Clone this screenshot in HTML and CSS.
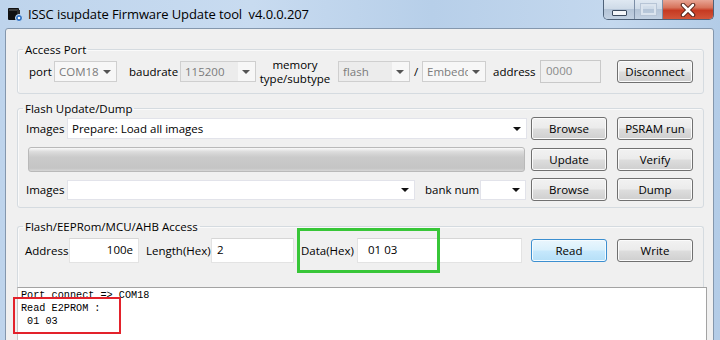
FILE: index.html
```html
<!DOCTYPE html>
<html lang="en">
<head>
    <meta charset="UTF-8">
    <title>ISSC isupdate Firmware Update tool</title>
    <link rel="stylesheet" href="styles.css">
</head>
<body>
    <div class="window">
        <!-- Title Bar -->
        <div class="titlebar">
            <svg class="app-icon" width="16" height="16" viewBox="0 0 16 16">
                <rect x="1" y="2" width="11" height="12" rx="1" fill="#111"/>
                <rect x="2" y="3" width="9" height="2" fill="#3a3a3a"/>
                <rect x="10" y="4" width="3" height="9" fill="#2b2b2b"/>
                <circle cx="12" cy="12" r="3.5" fill="#2d6fc0" stroke="#cfe2f6" stroke-width="1"/>
                <circle cx="12" cy="12" r="1.3" fill="#fff"/>
            </svg>
            <div class="title-text">ISSC isupdate Firmware Update tool&nbsp; v4.0.0.207</div>
            <div class="caption-buttons">
                <div class="cap-btn cap-min"><span class="min-glyph"></span></div>
                <div class="cap-btn cap-max"><span class="max-glyph"></span></div>
                <div class="cap-btn cap-close">
                    <svg width="20" height="14" viewBox="0 0 20 14">
                        <path d="M5 2 L15 12 M15 2 L5 12" stroke="#4a1a12" stroke-width="4.5" stroke-linecap="round"/>
                        <path d="M5 2 L15 12 M15 2 L5 12" stroke="#fff" stroke-width="2.6" stroke-linecap="round"/>
                    </svg>
                </div>
            </div>
        </div>

        <!-- Client Area -->
        <div class="client">
            <fieldset class="group group-port">
                <legend>Access Port</legend>
                <div class="row">
                    <span class="lbl lbl-port">port</span>
                    <div class="combo disabled w-com"><span class="val">COM18</span><span class="arrow"></span></div>
                    <span class="lbl lbl-baud">baudrate</span>
                    <div class="combo disabled shaded w-baud"><span class="val">115200</span><span class="arrow"></span></div>
                    <span class="lbl lbl-mem">memory<br>type/subtype</span>
                    <div class="combo disabled shaded w-flash"><span class="val">flash</span><span class="arrow"></span></div>
                    <span class="lbl lbl-slash">/</span>
                    <div class="combo disabled w-emb"><span class="val">Embedded</span><span class="arrow"></span></div>
                    <span class="lbl lbl-addr">address</span>
                    <div class="textbox disabled w-addr">0000</div>
                    <button class="btn btn-right">Disconnect</button>
                </div>
            </fieldset>

            <fieldset class="group group-flash">
                <legend>Flash Update/Dump</legend>
                <div class="row row-img">
                    <span class="lbl lbl-images">Images</span>
                    <div class="combo w-images"><span class="val">Prepare: Load all images</span><span class="arrow"></span></div>
                    <button class="btn btn-mid">Browse</button>
                    <button class="btn btn-right">PSRAM run</button>
                </div>
                <div class="row row-progress">
                    <div class="progress"></div>
                    <button class="btn btn-mid">Update</button>
                    <button class="btn btn-right">Verify</button>
                </div>
                <div class="row row-dump">
                    <span class="lbl lbl-images">Images</span>
                    <div class="combo w-images2"><span class="val"></span><span class="arrow"></span></div>
                    <span class="lbl lbl-bank">bank num</span>
                    <div class="combo w-bank"><span class="val"></span><span class="arrow"></span></div>
                    <button class="btn btn-mid">Browse</button>
                    <button class="btn btn-right">Dump</button>
                </div>
            </fieldset>

            <fieldset class="group group-access">
                <legend>Flash/EEPRom/MCU/AHB Access</legend>
                <div class="row row-access">
                    <span class="lbl lbl-address">Address</span>
                    <div class="textbox w-address right">100e</div>
                    <span class="lbl lbl-length">Length(Hex)</span>
                    <div class="textbox w-length">2</div>
                    <span class="lbl lbl-data">Data(Hex)</span>
                    <div class="textbox w-data">01 03</div>
                    <button class="btn btn-default">Read</button>
                    <button class="btn btn-right">Write</button>
                </div>
            </fieldset>

            <div class="log">
                <div class="log-line">Port connect =&gt; COM18</div>
                <div class="log-line">Read E2PROM :</div>
                <div class="log-line">&nbsp;01 03</div>
            </div>
        </div>

        <!-- Annotation marks -->
        <div class="mark mark-green"></div>
        <div class="mark mark-red"></div>
    </div>
</body>
</html>
```

FILE: styles.css
```css
/* General Styles */
body {
    margin: 0;
    font-family: 'Open Sans', 'Noto Sans', sans-serif;
    font-size: 11.5px;
    color: #000;
    background: #c2d7ee;
}

.window {
    position: relative;
    width: 720px;
    height: 340px;
    overflow: hidden;
    background: linear-gradient(to right, #bed4ec 0%, #c8dbf0 35%, #b7cfe9 60%, #c4d8ee 85%, #b3cce7 100%);
}

/* Title Bar */
.titlebar {
    height: 28px;
    display: flex;
    align-items: flex-start;
}

.app-icon {
    margin: 6px 0 0 7px;
}

.title-text {
    margin: 5px 0 0 5px;
    font-family: 'Open Sans', sans-serif;
    font-size: 13px;
    color: #000;
    letter-spacing: -0.1px;
}

.caption-buttons {
    margin-left: auto;
    margin-right: 6px;
    display: flex;
    height: 19px;
    border: 1px solid #4f6279;
    border-top: none;
    border-radius: 0 0 5px 5px;
    overflow: hidden;
}

.cap-btn {
    display: flex;
    justify-content: center;
    align-items: center;
}

.cap-min,
.cap-max {
    width: 30px;
    background: linear-gradient(#dfe8f2 0%, #cfdbe8 45%, #b4c4d7 50%, #c2d1e2 100%);
    border-right: 1px solid #7c8ea6;
}

.cap-max {
    width: 27px;
}

.min-glyph {
    width: 13px;
    height: 4px;
    margin-top: 6px;
    background: #f4f6f9;
    border: 1px solid #3b4a5e;
    border-radius: 1px;
}

.max-glyph {
    width: 11px;
    height: 7px;
    border: 2px solid #dbe4ee;
    outline: 1px solid #b7c5d6;
}

.cap-close {
    width: 50px;
    background: linear-gradient(#e8a594 0%, #d7735b 40%, #c63a22 55%, #d2553a 100%);
}

/* Client Area */
.client {
    margin-left: 5px;
    width: 696px;
    height: 320px;
    padding: 13px 0 0 11px;
    background: #f0f0f0;
    border: 1px solid #8497ad;
    border-radius: 3px 3px 0 0;
}

.group {
    margin: 0;
    width: 685px;
    padding: 0;
    border: 1px solid #d5dbe0;
    border-radius: 3px;
    box-shadow: inset 1px 1px 0 #fafafa;
}

.group legend {
    margin-left: 5px;
    padding: 0 2px;
    line-height: 15px;
}

.group-port {
    padding: 3px 0 10px;
}

.group-flash {
    margin-top: 7px;
    padding: 1px 0 6px;
}

.group-access {
    margin-top: 11px;
    padding: 4px 0 24px;
    border-bottom: none;
    border-radius: 3px 3px 0 0;
}

.row {
    display: flex;
    align-items: center;
    height: 23px;
}

.row-img {
    height: 22px;
}

.row-progress {
    height: 25px;
    margin-top: 8px;
}

.row-dump {
    margin-top: 6px;
}

.row-access {
    height: 25px;
}

/* Labels */
.lbl {
    flex: none;
    white-space: nowrap;
    line-height: 15px;
}

.lbl-port { margin-left: 11px; width: 25px; }
.lbl-baud { margin-left: 12px; width: 51px; }
.lbl-mem { width: 78px; padding-right: 4px; text-align: center; line-height: 14px; }
.lbl-slash { width: 12px; text-align: center; }
.lbl-addr { width: 47px; padding-left: 7px; }
.lbl-images { width: 41px; padding-left: 8px; }
.lbl-bank { width: 55px; padding-left: 10px; }
.lbl-address { width: 44px; padding-left: 7px; }
.lbl-length { width: 65px; padding-left: 7px; }
.lbl-data { width: 56px; padding-left: 7px; }

/* Combo boxes */
.combo {
    flex: none;
    box-sizing: border-box;
    height: 21px;
    display: flex;
    align-items: center;
    background: #fff;
    border: 1px solid #e2e3ea;
}

.combo .val {
    flex: 1;
    height: 100%;
    padding-left: 4px;
    line-height: 19px;
    overflow: hidden;
    white-space: nowrap;
}

.combo .arrow {
    flex: none;
    width: 0;
    height: 0;
    margin: 1px 5px 0 4px;
    border-left: 4px solid transparent;
    border-right: 4px solid transparent;
    border-top: 4px solid #111;
}

.combo.disabled {
    background: #f7f7f7;
    border-color: #cfcfcf;
    color: #7b7b7b;
}

.combo.disabled .arrow {
    border-top-color: #555;
}

.combo.shaded .val {
    background: #ececec;
}

.w-com { width: 63px; }
.w-baud { width: 76px; }
.w-flash { width: 72px; }
.w-emb { width: 64px; }
.w-images { width: 460px; }
.w-images2 { width: 348px; height: 20px; }
.w-bank { width: 46px; height: 20px; }

/* Text boxes */
.textbox {
    flex: none;
    box-sizing: border-box;
    height: 25px;
    padding: 0 5px;
    line-height: 22px;
    background: #fff;
    border: 1px solid #e3e3e3;
    border-top-color: #d6d6d6;
    white-space: nowrap;
}

.textbox.disabled {
    height: 23px;
    line-height: 19px;
    background: #f0f0f0;
    border-color: #c9c9c9;
    color: #8a8a8a;
}

.textbox.right {
    text-align: right;
}

.w-addr { width: 61px; }
.w-address { width: 70px; }
.w-length { width: 83px; }
.w-data { width: 165px; padding-left: 10px; }

/* Buttons */
.btn {
    flex: none;
    box-sizing: border-box;
    width: 76px;
    height: 23px;
    padding: 0;
    font-family: inherit;
    font-size: inherit;
    color: #000;
    border: 1px solid #707070;
    border-radius: 3px;
    background: linear-gradient(#f2f2f2 0%, #ebebeb 48%, #dddddd 52%, #cfcfcf 100%);
    box-shadow: inset 0 0 0 1px #fbfbfb;
}

.btn-mid {
    margin-left: 4px;
}

.row-progress .btn-mid { margin-left: 6px; }
.row-dump .btn-mid { margin-left: 5px; }

.btn-right {
    margin-left: 10px;
}

.btn-default {
    margin-left: 9px;
    border-color: #3c8fd0;
    background: linear-gradient(#eaf6fd 0%, #d9f0fc 48%, #c6e8fc 52%, #b5dff7 100%);
    box-shadow: inset 0 0 0 1px #f4fbff;
}

.group-port .btn-right {
    margin-left: 16px;
}

/* Progress bar */
.progress {
    flex: none;
    box-sizing: border-box;
    width: 497px;
    height: 25px;
    margin-left: 10px;
    border: 1px solid #b9b9b9;
    border-radius: 3px;
    background: linear-gradient(#fafafa 0%, #dcdcdc 16%, #cacaca 40%, #c5c5c5 88%, #d6d6d6 100%);
}

/* Log output */
.log {
    width: 685px;
    height: 60px;
    padding: 1px 0 0 3px;
    background: #fff;
    border: 1px solid #a3a3a3;
    border-left-color: #c9c9c9;
    font-family: 'Liberation Mono', monospace;
    font-size: 10.2px;
    color: #000;
    overflow: hidden;
}

.log-line {
    line-height: 13px;
    white-space: pre;
}

/* Annotations drawn over the screenshot */
.mark {
    position: absolute;
    box-sizing: border-box;
}

.mark-green {
    left: 297px;
    top: 228px;
    width: 143px;
    height: 45px;
    border: 3px solid #38c638;
}

.mark-red {
    left: 13px;
    top: 297px;
    width: 108px;
    height: 37px;
    border: 2px solid #e3222b;
}
```
